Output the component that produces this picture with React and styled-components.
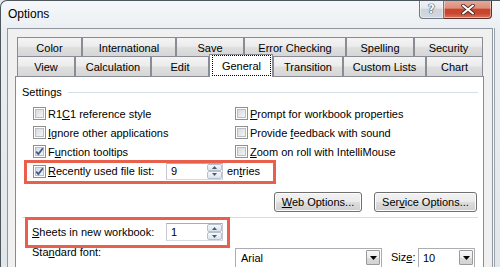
import React from 'react';
import styled, { createGlobalStyle } from 'styled-components';

const Global = createGlobalStyle`
  html, body { margin: 0; padding: 0; background: #e3e8ed; }
  body { font-family: "Liberation Sans", Arial, sans-serif; font-size: 11px; color: #000; }
  #root { width: 500px; height: 267px; overflow: hidden; }
  * { box-sizing: border-box; }
`;

const Window = styled.div`
  width: 500px;
  height: 267px;
  overflow: hidden;
  display: flex;
  flex-direction: column;
  border: 1px solid #4e565e;
  border-right: none;
  border-bottom: none;
  border-radius: 7px 0 0 0;
  background: linear-gradient(to bottom, #f6f8fa 0px, #eaeef2 30px, #e1e6eb 267px);
  padding: 0 7px 0 6px;
`;

const TitleBar = styled.div`
  height: 27px;
  display: flex;
  align-items: flex-start;
  flex-shrink: 0;
`;

const Title = styled.div`
  font-size: 12px;
  line-height: 27px;
  padding-left: 1px;
`;

const Caption = styled.div`
  margin-left: auto;
  margin-top: -1px;
  margin-right: 1px;
  display: flex;
`;

const CapButton = styled.div`
  width: ${p => p.$w}px;
  height: 19px;
  display: flex;
  align-items: center;
  justify-content: center;
  border: 1px solid ${p => (p.$close ? '#5a3129' : '#6e7986')};
  border-top: none;
  border-left: ${p => (p.$close ? 'none' : '1px solid #6e7986')};
  border-radius: ${p => (p.$close ? '0 0 4px 0' : '0 0 0 4px')};
  background: ${p =>
    p.$close
      ? 'linear-gradient(to bottom, #e9aa9b 0%, #dd8e7b 45%, #c8432c 52%, #c9462f 75%, #dc765e 100%)'
      : 'linear-gradient(to bottom, #f1f4f7 0%, #e3e8ed 45%, #ccd3da 52%, #d3d9df 100%)'};
  box-shadow: inset 0 0 0 1px rgba(255, 255, 255, 0.45);
`;

const HelpGlyph = styled.span`
  font-family: "DejaVu Sans", sans-serif;
  font-size: 12px;
  font-weight: bold;
  color: #f7f9fb;
  text-shadow: 0 0 1px #3a4450, 0 0 1px #3a4450, 0 0 1px #3a4450;
  line-height: 1;
`;

const Client = styled.div`
  flex: 1;
  min-height: 0;
  display: flex;
  flex-direction: column;
  background: #f0f0f0;
  border: 1px solid #8f969e;
  border-bottom: none;
  padding: 8px 8px 0 7px;
  box-shadow: 1px 0 0 #f7f9fa, 2px 0 0 #9aa2ab;
`;

const TabRow = styled.div`
  display: flex;
  align-items: flex-end;
  height: ${p => p.$h}px;
  margin-left: 2px;
  flex-shrink: 0;
`;

const Tab = styled.div`
  width: ${p => p.$w}px;
  height: 100%;
  flex-shrink: 0;
  display: flex;
  align-items: center;
  justify-content: center;
  padding-top: 1px;
  border: 1px solid #898c95;
  border-bottom: none;
  background: linear-gradient(to bottom, #f4f4f4 0%, #ececec 45%, #dedede 55%, #d6d6d6 100%);
  white-space: nowrap;
`;

const ActiveTab = styled.div`
  width: ${p => p.$w}px;
  height: 23px;
  margin-bottom: -1px;
  position: relative;
  z-index: 1;
  flex-shrink: 0;
  display: flex;
  padding: 0 1px 1px 2px;
  border: 1px solid #898c95;
  border-bottom: none;
  background: #fff;
`;

const Focus = styled.div`
  flex: 1;
  display: flex;
  align-items: center;
  justify-content: center;
  border: 1px dotted #000;
  padding-top: 1px;
`;

const Panel = styled.div`
  flex: 1;
  min-height: 0;
  background: #fff;
  border: 1px solid #898c95;
  border-bottom: none;
  padding: 9px 5px 0 6px;
  display: flex;
  flex-direction: column;
`;

const GroupHeader = styled.div`
  display: flex;
  align-items: center;
  gap: 6px;
  height: 13px;
  line-height: 13px;
`;

const Rule = styled.div`
  flex: 1;
  height: 1px;
  background: #d5dfe5;
  margin-top: ${p => p.$mt || 0}px;
`;

const OptionGrid = styled.div`
  display: grid;
  grid-template-columns: 202px auto;
  grid-auto-rows: 19px;
  margin-top: 5px;
  padding-left: 11px;
`;

const Option = styled.div`
  display: flex;
  align-items: center;
  gap: 2px;
  white-space: nowrap;
  width: ${p => (p.$w ? `${p.$w}px` : 'auto')};
  flex-shrink: 0;
`;

const Box = styled.span`
  width: 13px;
  height: 13px;
  flex-shrink: 0;
  border: 1px solid #8e8f8f;
  background: linear-gradient(135deg, #cfd3d9 0%, #eef0f2 70%, #f8f8f8 100%);
  box-shadow: inset 0 0 0 1px #fff, inset 0 0 0 2px #b9bec4;
  display: flex;
  align-items: center;
  justify-content: center;
`;

const FieldRow = styled.div`
  position: relative;
  display: flex;
  align-items: ${p => p.$align || 'center'};
  height: ${p => (p.$h ? `${p.$h}px` : 'auto')};
  margin-top: ${p => p.$mt || 0}px;
  padding-left: ${p => p.$pl || 0}px;
  flex-shrink: 0;
  white-space: nowrap;
`;

const FieldLabel = styled.div`
  width: ${p => p.$w}px;
  flex-shrink: 0;
  line-height: 13px;
  margin-left: ${p => p.$ml || 0}px;
`;

const Annotation = styled.span`
  position: absolute;
  left: ${p => p.$l}px;
  top: ${p => p.$t}px;
  width: ${p => p.$w}px;
  height: ${p => p.$h}px;
  border: 3px solid #e8604c;
  pointer-events: none;
`;

const Spin = styled.div`
  width: 57px;
  height: ${p => p.$h}px;
  display: flex;
  border: 1px solid #a9aeb5;
  border-left-color: #c6cad0;
  border-right-color: #c6cad0;
  border-bottom-color: #d6dbe1;
  background: #fff;
`;

const SpinValue = styled.div`
  flex: 1;
  padding-left: 4px;
  display: flex;
  align-items: center;
`;

const SpinButtons = styled.div`
  width: 15px;
  display: flex;
  flex-direction: column;
`;

const SpinHalf = styled.div`
  flex: 1;
  display: flex;
  align-items: center;
  justify-content: center;
  border: 1px solid #b5c1cf;
  border-radius: 2px;
  background: linear-gradient(to bottom, #f5f8fb 0%, #e8eef4 50%, #dbe3ec 100%);
`;

const Buttons = styled.div`
  display: flex;
  justify-content: flex-end;
  gap: 12px;
  margin-top: 11px;
  padding-right: 1px;
  flex-shrink: 0;
`;

const PushButton = styled.div`
  width: ${p => p.$w}px;
  height: 20px;
  display: flex;
  align-items: center;
  justify-content: center;
  border: 1px solid #707070;
  border-radius: 3px;
  background: linear-gradient(to bottom, #f2f2f2 0%, #ebebeb 48%, #dddddd 52%, #cfcfcf 100%);
  box-shadow: inset 0 0 0 1px #fcfcfc;
  white-space: nowrap;
`;

const Combo = styled.div`
  width: ${p => p.$w}px;
  height: 21px;
  margin-top: 2px;
  flex-shrink: 0;
  display: flex;
  align-items: flex-start;
  border: 1px solid #abadb3;
  border-bottom-color: #e3e9ef;
  background: #fff;
`;

const ComboText = styled.div`
  flex: 1;
  padding-left: ${p => p.$pl || 5}px;
  line-height: 18px;
`;

const ComboArrow = styled.div`
  width: 14px;
  height: 15px;
  margin: 1px 1px 0 0;
  display: flex;
  align-items: center;
  justify-content: center;
  border: 1px solid #9a9a9a;
  border-radius: 1px;
  background: linear-gradient(to bottom, #f7f7f7 0%, #ececec 50%, #dcdcdc 51%, #d2d2d2 100%);
`;

const SizeLabel = styled.div`
  width: 36px;
  padding-left: 9px;
  margin-top: 5px;
  line-height: 13px;
  flex-shrink: 0;
`;

function CheckBox({ checked }) {
  return (
    <Box>
      {checked && (
        <svg width="11" height="11" viewBox="0 0 11 11">
          <path d="M2.2 5.6 L4.4 8.1 L8.9 2.2" fill="none" stroke="#3d5893" strokeWidth="1.7" />
        </svg>
      )}
    </Box>
  );
}

const Tri = ({ up, color = '#4e5b6c', w = 5, h = 3 }) => (
  <svg width={w} height={h} viewBox={`0 0 ${w} ${h}`}>
    <path d={up ? `M0 ${h} L${w / 2} 0 L${w} ${h}Z` : `M0 0 L${w} 0 L${w / 2} ${h}Z`} fill={color} />
  </svg>
);

function SpinBox({ value, h }) {
  return (
    <Spin $h={h}>
      <SpinValue>{value}</SpinValue>
      <SpinButtons>
        <SpinHalf><Tri up /></SpinHalf>
        <SpinHalf><Tri /></SpinHalf>
      </SpinButtons>
    </Spin>
  );
}

const row1 = [
  ['Color', 65],
  ['International', 94],
  ['Save', 68],
  ['Error Checking', 102],
  ['Spelling', 68],
  ['Security', 69],
];

const row2 = [
  ['View', 58],
  ['Calculation', 76],
  ['Edit', 58],
  ['General', 64, true],
  ['Transition', 70],
  ['Custom Lists', 83],
  ['Chart', 57],
];

export default function App() {
  return (
    <>
      <Global />
      <Window>
        <TitleBar>
          <Title>Options</Title>
          <Caption>
            <CapButton $w={25}><HelpGlyph>?</HelpGlyph></CapButton>
            <CapButton $w={48} $close>
              <svg width="14" height="11" viewBox="0 0 14 11">
                <path d="M2 1.5 L12 9.5 M12 1.5 L2 9.5" stroke="#4a2a24" strokeWidth="3.6" strokeLinecap="round" />
                <path d="M2 1.5 L12 9.5 M12 1.5 L2 9.5" stroke="#ffffff" strokeWidth="2" strokeLinecap="round" />
              </svg>
            </CapButton>
          </Caption>
        </TitleBar>
        <Client>
          <TabRow $h={19}>
            {row1.map(([t, w]) => (
              <Tab key={t} $w={w}>{t}</Tab>
            ))}
          </TabRow>
          <TabRow $h={20}>
            {row2.map(([t, w, a]) =>
              a ? (
                <ActiveTab key={t} $w={w}><Focus>{t}</Focus></ActiveTab>
              ) : (
                <Tab key={t} $w={w}>{t}</Tab>
              )
            )}
          </TabRow>
          <Panel>
            <GroupHeader>
              <span>Settings</span>
              <Rule />
            </GroupHeader>
            <OptionGrid>
              <Option><CheckBox /><span>R1<u>C</u>1 reference style</span></Option>
              <Option><CheckBox /><span><u>P</u>rompt for workbook properties</span></Option>
              <Option><CheckBox /><span><u>I</u>gnore other applications</span></Option>
              <Option><CheckBox /><span>Provide <u>f</u>eedback with sound</span></Option>
              <Option><CheckBox checked /><span>F<u>u</u>nction tooltips</span></Option>
              <Option><CheckBox /><span><u>Z</u>oom on roll with IntelliMouse</span></Option>
            </OptionGrid>
            <FieldRow $h={20} $pl={11}>
              <Option $w={133}><CheckBox checked /><span><u>R</u>ecently used file list:</span></Option>
              <SpinBox value="9" h={17} />
              <FieldLabel $w={60} $ml={4}>en<u>t</u>ries</FieldLabel>
              <Annotation $l={2} $t={-1} $w={252} $h={24} />
            </FieldRow>
            <Buttons>
              <PushButton $w={88}><span><u>W</u>eb Options...</span></PushButton>
              <PushButton $w={103}><span>Ser<u>v</u>ice Options...</span></PushButton>
            </Buttons>
            <Rule $mt={5} style={{ flex: 'none' }} />
            <FieldRow $h={20} $mt={4} $pl={10}>
              <FieldLabel $w={134}><u>S</u>heets in new workbook:</FieldLabel>
              <SpinBox value="1" h={18} />
              <Annotation $l={3} $t={-5} $w={205} $h={31} />
            </FieldRow>
            <FieldRow $mt={4} $pl={10} $align="flex-start">
              <FieldLabel $w={203}>Sta<u>n</u>dard font:</FieldLabel>
              <Combo $w={147}>
                <ComboText>Arial</ComboText>
                <ComboArrow><Tri color="#000" w={7} h={4} /></ComboArrow>
              </Combo>
              <SizeLabel>Siz<u>e</u>:</SizeLabel>
              <Combo $w={57}>
                <ComboText $pl={4}>10</ComboText>
                <ComboArrow><Tri color="#000" w={7} h={4} /></ComboArrow>
              </Combo>
            </FieldRow>
          </Panel>
        </Client>
      </Window>
    </>
  );
}
